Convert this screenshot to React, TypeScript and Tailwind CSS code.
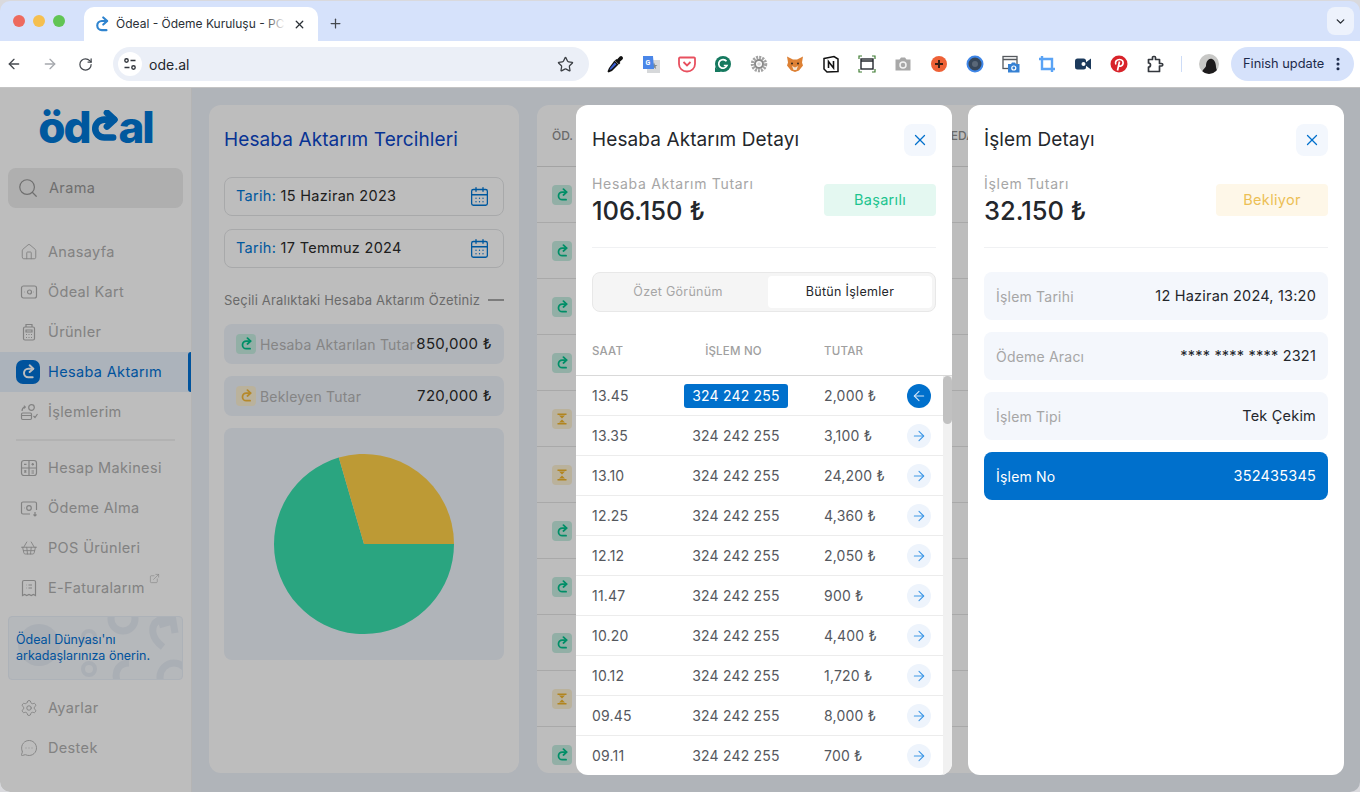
import { ArrowLeft, ArrowRight, CalendarDays, ChevronDown, ExternalLink, Home, MessageCircleMore, MoreVertical, Plus, RotateCw, Search, Settings, ShoppingBasket, Star, X } from 'lucide-react';

const detailRows = [
    { time: '13.45', amount: '2,000 ₺', active: true },
    { time: '13.35', amount: '3,100 ₺' },
    { time: '13.10', amount: '24,200 ₺' },
    { time: '12.25', amount: '4,360 ₺' },
    { time: '12.12', amount: '2,050 ₺' },
    { time: '11.47', amount: '900 ₺' },
    { time: '10.20', amount: '4,400 ₺' },
    { time: '10.12', amount: '1,720 ₺' },
    { time: '09.45', amount: '8,000 ₺' },
    { time: '09.11', amount: '700 ₺' },
];

const bgRows = ['ok', 'ok', 'ok', 'ok', 'wait', 'wait', 'ok', 'ok', 'ok', 'wait', 'ok'];

function Mark({ size = 14, color = '#0070cc', width = 3 }: { size?: number; color?: string; width?: number }) {
    return (
        <svg width={size} height={size} viewBox="0 0 24 24" fill="none" stroke={color} strokeWidth={width} strokeLinecap="round" strokeLinejoin="round">
            <path d="M19 20H12.500a6.500 6.500 0 0 1 0-13H19.500" />
            <path d="M14.500 2l5.500 5-5.500 5" />
        </svg>
    );
}

function Hourglass({ color }: { color: string }) {
    return (
        <svg width="12" height="12" viewBox="0 0 12 12" fill={color}>
            <path d="M1.500 0.500h9v1.400h-9zM1.500 10.100h9v1.400h-9zM3 2.400h6L6 5.600zM6 6.400l3 3.200H3z" />
        </svg>
    );
}

function Browser() {
    return (
        <div className="shrink-0">
            <div className="flex h-[40px] bg-[#d6e2fb] pt-[6px]">
                <div className="flex w-[84px] gap-2 pl-[13px] pt-2">
                    <span className="h-3 w-3 rounded-full bg-[#ed6a5e]" />
                    <span className="h-3 w-3 rounded-full bg-[#f5bf4f]" />
                    <span className="h-3 w-3 rounded-full bg-[#61c554]" />
                </div>
                <div className="flex h-[34px] w-[234px] items-center rounded-t-[10px] bg-white pl-[9px] pr-[12px]">
                    <Mark size={17} color="#2f84cf" width={3} />
                    <span className="relative ml-[6px] min-w-0 flex-1 overflow-hidden whitespace-nowrap text-[12px] text-[#2a2f36]">
                        Ödeal - Ödeme Kuruluşu - PC
                        <span className="absolute inset-y-0 right-0 w-5 bg-gradient-to-r from-transparent to-white" />
                    </span>
                    <X size={13} strokeWidth={2.400} className="ml-[8px] shrink-0 text-[#2a2f36]" />
                </div>
                <Plus size={15} strokeWidth={2} className="ml-[10px] mt-[9px] text-[#45494f]" />
                <div className="flex-1" />
                <div className="mr-[6px] flex h-[28px] w-[27px] items-center justify-center rounded-lg bg-[#edf2fc]">
                    <ChevronDown size={13} strokeWidth={2.600} className="text-[#2a2f36]" />
                </div>
            </div>
            <div className="flex h-[47px] items-center border-b border-[#c4c4c4] bg-white">
                <div className="flex w-[113px] items-center gap-[20px] pl-[6px]">
                    <ArrowLeft size={16} strokeWidth={2} className="text-[#45494f]" />
                    <ArrowRight size={16} strokeWidth={2} className="text-[#a5a8ad]" />
                    <RotateCw size={15} strokeWidth={2} className="text-[#45494f]" />
                </div>
                <div className="flex h-[34px] w-[476px] items-center rounded-full bg-[#ebeff7] pl-[5px] pr-[15px]">
                    <span className="flex h-6 w-6 items-center justify-center rounded-full bg-white">
                        <svg width="14" height="14" viewBox="0 0 14 14" fill="none" stroke="#33373d" strokeWidth="1.400">
                            <circle cx="3.500" cy="3.500" r="1.700" />
                            <path d="M7.500 3.500h5M1.500 10.500h5" />
                            <circle cx="10.500" cy="10.500" r="1.700" />
                        </svg>
                    </span>
                    <span className="ml-[7px] flex-1 text-[14px] text-[#24282e]">ode.al</span>
                    <Star size={17} strokeWidth={1.800} className="text-[#3c4045]" />
                </div>
                <Extensions />
            </div>
        </div>
    );
}

function Extensions() {
    return (
        <div className="ml-[17px] flex items-center">
            <div className="flex items-center gap-[18px]">
                <svg width="18" height="18" viewBox="0 0 18 18"><path d="M11 4.500l2.800-3a2 2 0 0 1 2.800 2.800l-3 2.800.8.900-1.500 1.500-4-4 1.500-1.500z" fill="#111" /><path d="M8.500 5.500l4 4-6.500 6.500-3.500 1.500-1-1L3 13z" fill="#111" /><path d="M8.700 7.500l1.800 1.800-5 5-2 .7.700-2z" fill="#3b5fd0" /></svg>
                <svg width="18" height="18" viewBox="0 0 18 18"><rect x="5" y="5" width="13" height="13" fill="#d6d8da" /><path d="M12 7.500l1 2.500h2.500l-2 1.500.7 2.500-2.200-1.500-2.200 1.500.7-2.500-2-1.500H11z" fill="#7e8a90" /><path d="M1 1h10l1 13H1z" fill="#4a86e8" /><text x="3.500" y="10" fontSize="7" fontWeight="700" fill="#fff" fontFamily="Roboto, sans-serif">G</text></svg>
                <svg width="18" height="18" viewBox="0 0 18 18" fill="none"><path d="M2 2.500h14a1 1 0 0 1 1 1V9a8 7.500 0 0 1-16 0V3.500a1 1 0 0 1 1-1z" stroke="#e8505f" strokeWidth="1.800" /><path d="M5.500 7L9 10.500 12.500 7" stroke="#e8505f" strokeWidth="1.800" /></svg>
                <svg width="18" height="18" viewBox="0 0 18 18" fill="none"><circle cx="9" cy="9" r="8" fill="#15795f" /><path d="M12.500 6.300A4.300 4.300 0 1 0 13 10.500H9.800" stroke="#fff" strokeWidth="1.700" /><path d="M1 12v5h6z" fill="#15795f" /></svg>
                <svg width="18" height="18" viewBox="0 0 18 18" fill="none"><circle cx="9" cy="9" r="6.500" stroke="#a3a3a3" strokeWidth="3.500" strokeDasharray="2 1" /><circle cx="9" cy="9" r="4" stroke="#8a8a8a" strokeWidth="2" /><circle cx="9" cy="9" r="1.800" fill="#d9d9d9" /></svg>
                <svg width="18" height="18" viewBox="0 0 18 18"><path d="M1 1.500l6 3h4l6-3-1 6 1 3-4 5-4 1.500L5 15.500l-4-5 1-3z" fill="#dd8135" /><path d="M6 11l3 1.500 3-1.500-1.500 4h-3z" fill="#f3e3d1" /><circle cx="6" cy="8.500" r="1" fill="#33261a" /><circle cx="12" cy="8.500" r="1" fill="#33261a" /></svg>
                <svg width="18" height="18" viewBox="0 0 18 18" fill="none"><path d="M2 3.500L12 1.500l4 2.500v12.500L5 17l-3-3z" fill="#fff" stroke="#111" strokeWidth="1.500" /><path d="M6.500 13V6.500l5 6.500V6" stroke="#111" strokeWidth="1.600" /></svg>
                <svg width="18" height="18" viewBox="0 0 18 18" fill="none"><rect x="3" y="4" width="12" height="10" stroke="#24282e" strokeWidth="1.400" /><path d="M3 6h12" stroke="#24282e" strokeWidth="1.400" /><path d="M1 4V1h3M14 1h3v3M1 14v3h3M14 17h3v-3" stroke="#3f7d32" strokeWidth="1.200" /></svg>
                <svg width="18" height="18" viewBox="0 0 18 18"><path d="M1.500 4.500h4L7 2.500h4l1.500 2h4v11h-15z" fill="#a8a8a8" /><circle cx="9" cy="10" r="3" fill="none" stroke="#f2f2f2" strokeWidth="1.500" /></svg>
                <svg width="18" height="18" viewBox="0 0 18 18" fill="none"><circle cx="9" cy="9" r="8" fill="#ee6136" /><path d="M9 5v8M5 9h8" stroke="#3b2015" strokeWidth="2" /></svg>
                <svg width="18" height="18" viewBox="0 0 18 18" fill="none"><circle cx="9" cy="9" r="7.500" fill="#37475a" stroke="#3e86e8" strokeWidth="2" /><circle cx="9" cy="9" r="3" fill="#5a6878" /></svg>
                <svg width="18" height="18" viewBox="0 0 18 18" fill="none"><rect x="1" y="1.500" width="14" height="12" stroke="#55595e" strokeWidth="1.300" /><path d="M1 4.500h14" stroke="#55595e" strokeWidth="1.300" /><path d="M6 9h3l1-1.500h3l1 1.500h3.500v8.500H6z" fill="#3681d3" /><circle cx="11.800" cy="13" r="2" stroke="#fff" strokeWidth="1.200" /></svg>
                <svg width="18" height="18" viewBox="0 0 18 18" fill="none"><path d="M4 1v13h13M1 4h13v13" stroke="#5aa3f5" strokeWidth="2.400" /></svg>
                <svg width="18" height="18" viewBox="0 0 18 18"><rect x="1" y="3.500" width="11" height="11" rx="2.500" fill="#1c3a5c" /><path d="M11 8l6-4.500v11L11 10z" fill="#1c3a5c" /><circle cx="9.500" cy="9" r="2" fill="#fff" /></svg>
                <svg width="18" height="18" viewBox="0 0 18 18" fill="none"><circle cx="9" cy="9" r="8.500" fill="#d8232a" /><path d="M7.500 15.500L9.500 6.500M5.800 9.500C4.500 6.500 7 4.500 9.500 4.500c2.800 0 4 2 3.500 4.200-.5 2.300-3 3.300-4.500 1.600" stroke="#fff" strokeWidth="1.700" /></svg>
                <svg width="18" height="18" viewBox="0 0 18 18" fill="none" stroke="#33373d" strokeWidth="1.700" strokeLinejoin="round"><path d="M2.500 4.500H6.500V2.500a1 1 0 0 1 1-1h1a1 1 0 0 1 1 1v2h4v4h2a1 1 0 0 1 0 2.500h-2v5.500h-11V12a2 2 0 0 0 0-4z" /></svg>
            </div>
            <span className="ml-[17px] h-[16px] w-[1px] bg-[#cddcf7]" />
            <span className="ml-[17px] h-5 w-5 overflow-hidden rounded-full bg-[#c8c8c6]">
                <svg width="20" height="20" viewBox="0 0 20 20"><path d="M3 20c0-5 3-5 4-8 0-5 3-8 6-7 3 1 4 5 4 8 0 2 2 4 2 7z" fill="#1d1b1c" /></svg>
            </span>
            <div className="ml-[12px] flex h-[34px] w-[123px] items-center rounded-full bg-[#d6e2fb] pl-3 text-[12.800px] text-[#1c2a4a]">
                <span className="flex-1 whitespace-nowrap">Finish update</span>
                <MoreVertical size={16} strokeWidth={2.600} className="mr-[8px] text-[#1c2a4a]" />
            </div>
        </div>
    );
}

function WalletIcon() {
    return (
        <svg width="18" height="18" viewBox="0 0 18 18" fill="none" stroke="currentColor" strokeWidth="1.200">
            <rect x="1.500" y="3" width="15" height="12" rx="2" />
            <circle cx="9.500" cy="9" r="2" />
            <path d="M4.500 9h.5M14 9h-.5" />
        </svg>
    );
}

function ProductsIcon() {
    return (
        <svg width="18" height="18" viewBox="0 0 18 18" fill="none" stroke="currentColor" strokeWidth="1.200">
            <rect x="3.500" y="4" width="11" height="13" rx="1.500" />
            <path d="M6 4V1.500h6V4M6 7h6v2H6zM6 11.500h1M8.500 11.500h1M11 11.500h1M6 14.500h1M8.500 14.500h1M11 14.500h1" />
        </svg>
    );
}

function TxIcon() {
    return (
        <svg width="18" height="18" viewBox="0 0 18 18" fill="none" stroke="currentColor" strokeWidth="1.200">
            <circle cx="11.500" cy="4.500" r="2.800" />
            <rect x="1.500" y="10" width="10" height="6.500" rx="1.200" />
            <path d="M1.500 12.500h10M2 8c0-2 1-3.500 3-4M3.800 2.800l1.500 1.200-1.200 1.500M13.500 13l1.500 1.500 2.500-3.500" />
        </svg>
    );
}

function MakerIcon() {
    return (
        <svg width="18" height="18" viewBox="0 0 18 18" fill="none" stroke="currentColor" strokeWidth="1.200">
            <rect x="1.500" y="1.500" width="15" height="15" rx="2.500" />
            <path d="M9 1.500v15M1.500 9h15M4 5.300h2.500M11.500 5.300h2.500M12.700 4v2.500M4.300 11.500l2 2M6.300 11.500l-2 2M11.500 12h2.500M11.500 14h2.500" />
        </svg>
    );
}

function PaymentIcon() {
    return (
        <svg width="18" height="18" viewBox="0 0 18 18" fill="none" stroke="currentColor" strokeWidth="1.200">
            <path d="M10 15H3a1.500 1.500 0 0 1-1.500-1.500v-9A1.500 1.500 0 0 1 3 3h12a1.500 1.500 0 0 1 1.500 1.500V11" />
            <circle cx="9" cy="9" r="2.300" />
            <path d="M4 9h.5M15 13v4M13.500 15.500L15 17l1.500-1.500" />
        </svg>
    );
}

function InvoiceIcon() {
    return (
        <svg width="18" height="18" viewBox="0 0 18 18" fill="none" stroke="currentColor" strokeWidth="1.200">
            <path d="M2.500 3a1.500 1.500 0 0 1 1.500-1.500h10A1.500 1.500 0 0 1 15.500 3v13.500l-2.200-1-2 1-2.300-1-2.300 1-2-1-2.200 1z" />
            <path d="M6 6h.5M8.500 6H12M6 9h.5M8.500 9H12" />
        </svg>
    );
}

function NavItem({ icon, label, active }: { icon: React.ReactNode; label: string; active?: boolean }) {
    return (
        <div className={active ? 'relative flex h-10 items-center gap-2 bg-[#e8f2fd] pl-[16px] text-[#0070d4]' : 'flex h-10 items-center gap-[10px] pl-[20px] text-[#b0b0b0]'}>
            {icon}
            <span className="whitespace-nowrap text-[14.500px] tracking-[0.35px]">{label}</span>
            {active && <span className="absolute right-0 top-0 h-10 w-[3px] rounded-l-sm bg-[#0070d4]" />}
        </div>
    );
}

function Sidebar() {
    return (
        <div className="flex w-[192px] shrink-0 flex-col border-r border-[#f3f3f3] bg-white">
            <div className="flex h-[80px] items-center justify-center pb-[3px] text-[#0077d6]">
                <span className="text-[44px] font-extrabold leading-none tracking-[-2px]">öd</span>
                <span className="-mx-[2px]"><Mark size={33} color="#0077d6" width={4.800} /></span>
                <span className="text-[44px] font-extrabold leading-none tracking-[-2px]">al</span>
            </div>
            <div className="mx-2 flex h-10 items-center gap-[10px] rounded-lg bg-[#ececec] pl-[9px] text-[#969696]">
                <Search size={22} strokeWidth={1.300} />
                <span className="text-[14.500px] tracking-[0.35px]">Arama</span>
            </div>
            <div className="mt-6">
                <NavItem icon={<Home size={18} strokeWidth={1.200} />} label="Anasayfa" />
                <NavItem icon={<WalletIcon />} label="Ödeal Kart" />
                <NavItem icon={<ProductsIcon />} label="Ürünler" />
                <NavItem active icon={<span className="flex h-6 w-6 items-center justify-center rounded-[7px] bg-[#0070d4]"><Mark size={16} color="#fff" /></span>} label="Hesaba Aktarım" />
                <NavItem icon={<TxIcon />} label="İşlemlerim" />
            </div>
            <div className="mx-4 my-[7px] h-[2px] bg-[#f0f0f0]" />
            <NavItem icon={<MakerIcon />} label="Hesap Makinesi" />
            <NavItem icon={<PaymentIcon />} label="Ödeme Alma" />
            <NavItem icon={<ShoppingBasket size={18} strokeWidth={1.200} />} label="POS Ürünleri" />
            <div className="relative">
                <NavItem icon={<InvoiceIcon />} label="E-Faturalarım" />
                <ExternalLink size={11} strokeWidth={1.300} className="absolute left-[149px] top-[5px] text-[#b0b0b0]" />
            </div>
            <div className="relative mx-2 mt-2 h-16 overflow-hidden rounded-[4px] border border-[#eaf0f8] bg-[#f4f8fc] pl-[7px] pt-[15px] text-[12.500px] leading-[16px] text-[#0070d4]">
                <svg className="absolute inset-0" width="176" height="64" viewBox="0 0 176 64" fill="none" stroke="#e6ecf4" strokeWidth="7">
                    <circle cx="30" cy="28" r="21" fill="#e6ecf4" stroke="none" />
                    <circle cx="114" cy="2" r="12" />
                    <circle cx="80" cy="20" r="6" strokeWidth="4" />
                    <circle cx="80" cy="52" r="6" strokeWidth="4" />
                    <path d="M164 2c-10-2-22 1-20 14 1 6 6 11 10 14M150 8l14-4 2 12" />
                    <path d="M120 46c-10 0-15 8-12 18" />
                    <circle cx="165" cy="60" r="14" />
                </svg>
                <p className="relative whitespace-nowrap">Ödeal Dünyası'nı<br />arkadaşlarınıza önerin.</p>
            </div>
            <div className="mt-2">
                <NavItem icon={<Settings size={18} strokeWidth={1.200} />} label="Ayarlar" />
                <NavItem icon={<MessageCircleMore size={18} strokeWidth={1.200} />} label="Destek" />
            </div>
        </div>
    );
}

function DateField({ value }: { value: string }) {
    return (
        <div className="flex h-[39px] items-center justify-between rounded-lg border border-[#e3e4e6] pb-[1px] pl-[11px] pr-[13px] text-[14.500px] tracking-[0.3px]">
            <span><span className="text-[#0077d6]">Tarih:</span> <span className="text-[#2a2a2a]">{value}</span></span>
            <CalendarDays size={21} strokeWidth={1.500} className="text-[#0077d6]" />
        </div>
    );
}

function StatRow({ label, value, color, tint }: { label: string; value: string; color: string; tint: string }) {
    return (
        <div className="flex h-10 items-center rounded-lg bg-[#eef3fa] px-3">
            <span className={`flex h-5 w-5 shrink-0 items-center justify-center rounded-[4px] ${tint}`}>
                <Mark size={14} color={color} />
            </span>
            <span className="ml-1 flex-1 whitespace-nowrap text-[14px] tracking-[0.2px] text-[#b4b4b4]">{label}</span>
            <span className="whitespace-nowrap text-[15px] tracking-[0.3px] text-[#2a2a2a]">{value}</span>
        </div>
    );
}

function Preferences() {
    return (
        <div className="flex h-[668px] w-[310px] shrink-0 flex-col rounded-xl bg-white px-[15px]">
            <h2 className="mt-[23px] text-[19px] font-normal leading-6 tracking-[0.1px] text-[#0b46c8]">Hesaba Aktarım Tercihleri</h2>
            <div className="mt-[25px] flex flex-col gap-[13px]">
                <DateField value="15 Haziran 2023" />
                <DateField value="17 Temmuz 2024" />
            </div>
            <div className="mt-6 flex items-center justify-between">
                <span className="whitespace-nowrap text-[13px] leading-4 tracking-[0.2px] text-[#909090]">Seçili Aralıktaki Hesaba Aktarım Özetiniz</span>
                <span className="h-[1.500px] w-4 bg-[#a8a8a8]" />
            </div>
            <div className="mt-4 flex flex-col gap-3">
                <StatRow label="Hesaba Aktarılan Tutar" value="850,000 ₺" color="#00c08b" tint="bg-[#c5ede0]" />
                <StatRow label="Bekleyen Tutar" value="720,000 ₺" color="#f5b93a" tint="bg-[#fbf0d3]" />
            </div>
            <div className="mt-3 flex h-[232px] items-center justify-center rounded-lg bg-[#eef3fa]">
                <svg width="180" height="180" viewBox="0 0 180 180">
                    <path d="M90 90L180 90A90 90 0 1 1 64.800 3.600Z" fill="#39dfad" />
                    <path d="M90 90L64.800 3.600A90 90 0 0 1 180 90Z" fill="#ffd048" />
                </svg>
            </div>
        </div>
    );
}

function BackgroundTable() {
    return (
        <div className="ml-[18px] flex h-[668px] w-[807px] shrink-0 flex-col overflow-hidden rounded-xl bg-white">
            <div className="flex h-[62px] shrink-0 items-center border-b border-[#dcdcdc] pl-[15px] text-[12px] font-medium text-[#8f8f8f]">
                <span>ÖD.</span>
                <span className="ml-[370px]">TEDARİK</span>
            </div>
            {bgRows.map((kind, i) => (
                <div key={i} className="flex h-[56px] shrink-0 items-center border-b border-[#e4e4e4] pl-[15px]">
                    {kind === 'ok' ? (
                        <span className="flex h-5 w-5 items-center justify-center rounded-[4px] bg-[#c5ede0]"><Mark size={14} color="#00c08b" /></span>
                    ) : (
                        <span className="flex h-5 w-5 items-center justify-center rounded-[4px] bg-[#fbf0d3]"><Hourglass color="#f0b429" /></span>
                    )}
                </div>
            ))}
        </div>
    );
}

function CloseButton() {
    return (
        <button className="flex h-8 w-8 items-center justify-center rounded-lg bg-[#f3f7fd]">
            <X size={18} strokeWidth={1.700} className="text-[#0070cc]" />
        </button>
    );
}

function PanelHead({ title, sub, amount, status, statusClass }: { title: string; sub: string; amount: string; status: string; statusClass: string }) {
    return (
        <div className="mx-4">
            <div className="flex h-[52px] items-center justify-between pb-[1px] pt-[19px]">
                <h2 className="whitespace-nowrap text-[19px] font-normal tracking-[0.1px] text-[#24272c]">{title}</h2>
                <CloseButton />
            </div>
            <div className="mt-[19px] flex h-[72px] items-start justify-between border-b-[1.500px] border-[#f0f1f3]">
                <div>
                    <p className="text-[14px] leading-[16px] tracking-[0.7px] text-[#a6a6a6]">{sub}</p>
                    <p className="mt-[4px] text-[25.500px] font-medium leading-[30px] text-[#24272c]">{amount}</p>
                </div>
                <div className={`mt-[8px] flex h-8 w-28 items-center justify-center rounded-[4px] text-[14.500px] tracking-[0.3px] ${statusClass}`}>{status}</div>
            </div>
        </div>
    );
}

function DetailPanel() {
    return (
        <div className="flex h-[670px] w-[376px] flex-col overflow-hidden rounded-xl bg-white">
            <PanelHead title="Hesaba Aktarım Detayı" sub="Hesaba Aktarım Tutarı" amount="106.150 ₺" status="Başarılı" statusClass="bg-[#e4f8f1] text-[#1cc48f]" />
            <div className="mx-4 mt-6 flex h-10 items-center gap-2 rounded-lg border border-[#e8e8e8] bg-[#f5f5f5] px-[3px]">
                <div className="flex-1 text-center text-[12.500px] tracking-[0.3px] text-[#a6a6a6]">Özet Görünüm</div>
                <div className="flex h-8 w-[164px] items-center justify-center rounded-[4px] bg-white text-[12.500px] tracking-[0.3px] text-[#24272c]">Bütün İşlemler</div>
            </div>
            <div className="mt-[21px] flex h-[43px] items-center border-b border-[#d9d9d9] pb-[4px] pl-4 text-[11.500px] font-medium tracking-[0.2px] text-[#a0a0a0]">
                <span className="w-[92px]">SAAT</span>
                <span className="w-[104px] pr-[5px] text-center">İŞLEM NO</span>
                <span className="ml-9">TUTAR</span>
            </div>
            <div className="flex min-h-0 flex-1">
                <div className="min-w-0 flex-1">
                    {detailRows.map((row) => (
                        <div key={row.time} className="flex h-10 items-center border-b border-[#ececec] pl-4 pr-3 text-[14px] tracking-[0.2px] text-[#55585e]">
                            <span className="w-[92px]">{row.time}</span>
                            <span className={row.active ? 'flex h-6 w-[104px] items-center justify-center rounded-[3px] bg-[#0070cc] text-white' : 'flex h-6 w-[104px] items-center justify-center'}>324 242 255</span>
                            <span className="ml-9 flex-1">{row.amount}</span>
                            <span className={row.active ? 'flex h-6 w-6 items-center justify-center rounded-full bg-[#0070cc] text-[#cfe4f8]' : 'flex h-6 w-6 items-center justify-center rounded-full bg-[#eef4fc] text-[#3d97e6]'}>
                                {row.active ? <ArrowLeft size={16} strokeWidth={1.600} /> : <ArrowRight size={16} strokeWidth={1.600} />}
                            </span>
                        </div>
                    ))}
                </div>
                <div className="w-[9px] shrink-0 bg-[#f1f1f1]">
                    <div className="h-12 rounded-full bg-[#c1c1c1]" />
                </div>
            </div>
        </div>
    );
}

function InfoRow({ label, value, primary }: { label: string; value: string; primary?: boolean }) {
    return (
        <div className={primary ? 'flex h-12 items-center justify-between rounded-lg bg-[#0070cc] px-3 tracking-[0.2px] text-white' : 'flex h-12 items-center justify-between rounded-lg bg-[#f4f7fc] px-3 tracking-[0.2px]'}>
            <span className={primary ? 'text-[14px]' : 'text-[14px] text-[#a6a6a6]'}>{label}</span>
            <span className={primary ? 'text-[14.500px]' : 'text-[14.500px] text-[#24272c]'}>{value}</span>
        </div>
    );
}

function TransactionPanel() {
    return (
        <div className="h-[670px] w-[376px] rounded-xl bg-white">
            <PanelHead title="İşlem Detayı" sub="İşlem Tutarı" amount="32.150 ₺" status="Bekliyor" statusClass="bg-[#fef7e8] text-[#ecbf55]" />
            <div className="mx-4 mt-6 flex flex-col gap-3">
                <InfoRow label="İşlem Tarihi" value="12 Haziran 2024, 13:20" />
                <InfoRow label="Ödeme Aracı" value="**** **** **** 2321" />
                <InfoRow label="İşlem Tipi" value="Tek Çekim" />
                <InfoRow primary label="İşlem No" value="352435345" />
            </div>
        </div>
    );
}

export default function App() {
    return (
        <div className="h-[792px] w-[1360px] overflow-hidden bg-[#d9d9dd] pt-[1px] font-['Inter',sans-serif]">
            <div className="flex h-[791px] flex-col overflow-hidden rounded-[10px]">
                <Browser />
                <div className="relative flex min-h-0 flex-1 bg-[#eef3fa]">
                    <Sidebar />
                    <div className="flex flex-1 pl-[17px] pt-[17px]">
                        <Preferences />
                        <BackgroundTable />
                    </div>
                    <div className="absolute inset-0 flex justify-end gap-4 bg-black/[.26] pr-4 pt-[17px]">
                        <DetailPanel />
                        <TransactionPanel />
                    </div>
                </div>
            </div>
        </div>
    );
}
